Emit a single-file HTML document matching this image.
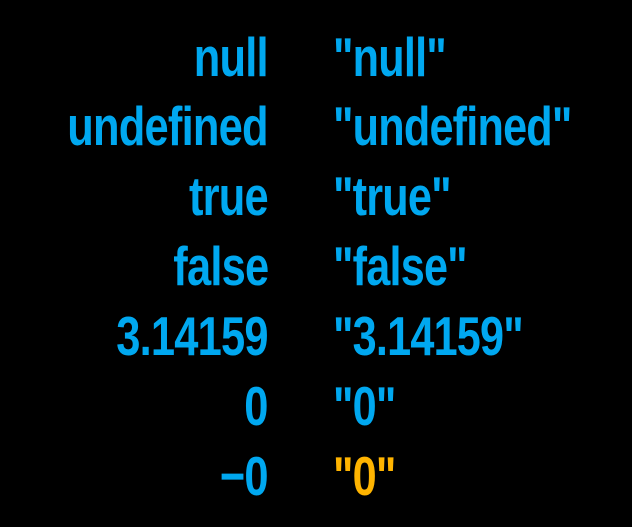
<!DOCTYPE html>
<html><head><style>
html,body{margin:0;padding:0;background:#000;width:632px;height:527px;overflow:hidden}
.r{position:absolute;left:0;width:632px;height:70px;font-family:"Liberation Sans",sans-serif;font-weight:bold;font-size:55px;color:#00a8f0;line-height:70px}
.l{position:absolute;right:364px;text-align:right;white-space:nowrap;letter-spacing:-1px;transform:scaleX(0.79);transform-origin:right center}
.v{position:absolute;left:333px;white-space:nowrap;letter-spacing:-1px;transform:scaleX(0.785);transform-origin:left center}
</style></head><body>
<div class="r" style="top:22px"><span class="l">null</span><span class="v">"null"</span></div>
<div class="r" style="top:91px"><span class="l">undefined</span><span class="v">"undefined"</span></div>
<div class="r" style="top:161px"><span class="l">true</span><span class="v">"true"</span></div>
<div class="r" style="top:231px"><span class="l">false</span><span class="v">"false"</span></div>
<div class="r" style="top:301px"><span class="l">3.14159</span><span class="v">"3.14159"</span></div>
<div class="r" style="top:371px"><span class="l">0</span><span class="v">"0"</span></div>
<div class="r" style="top:441px"><span class="l">−0</span><span class="v" style="color:#ffb400">"0"</span></div>
</body></html>
